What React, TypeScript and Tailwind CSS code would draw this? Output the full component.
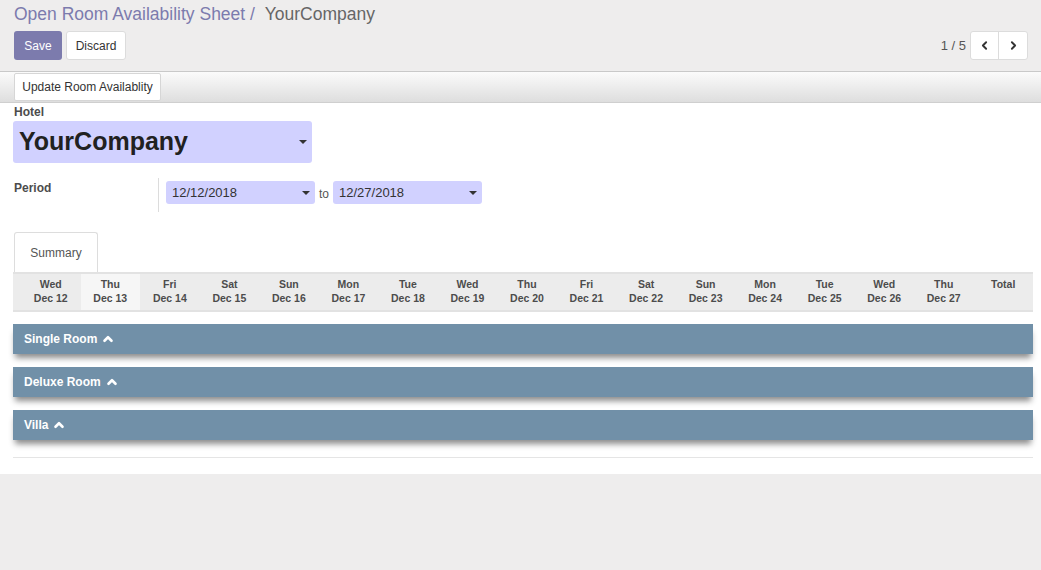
import { ChevronLeft, ChevronRight, ChevronUp } from "lucide-react";

const days = [
  ["Wed", "Dec 12"],
  ["Thu", "Dec 13"],
  ["Fri", "Dec 14"],
  ["Sat", "Dec 15"],
  ["Sun", "Dec 16"],
  ["Mon", "Dec 17"],
  ["Tue", "Dec 18"],
  ["Wed", "Dec 19"],
  ["Thu", "Dec 20"],
  ["Fri", "Dec 21"],
  ["Sat", "Dec 22"],
  ["Sun", "Dec 23"],
  ["Mon", "Dec 24"],
  ["Tue", "Dec 25"],
  ["Wed", "Dec 26"],
  ["Thu", "Dec 27"],
];

const rooms = ["Single Room", "Deluxe Room", "Villa"];

function Caret() {
  return (
    <svg width="8" height="4" viewBox="0 0 8 4" className="shrink-0">
      <path d="M0 0h8L4 4z" fill="#333" />
    </svg>
  );
}

function DateInput({ value }: { value: string }) {
  return (
    <div className="flex h-[23px] w-[149px] items-center justify-between rounded-[3px] bg-[#d1d1ff] pl-[6px] pr-[5px] text-[13px] text-[#333]">
      <span>{value}</span>
      <Caret />
    </div>
  );
}

export default function App() {
  return (
    <div className="min-h-[570px] bg-[#eeeded] font-['Liberation_Sans',Arial,sans-serif] text-[#4c4c4c]">
      {/* Control panel */}
      <div className="border-b border-[#c9c9c9] px-[14px] pb-[11px] pt-[3px]">
        <div className="text-[17.5px] leading-[22px]">
          <span className="text-[#7c7bad]">Open Room Availability Sheet /</span>
          <span className="text-[#666]">&nbsp;&nbsp;YourCompany</span>
        </div>
        <div className="mt-[6px] flex items-center justify-between">
          <div className="flex gap-[4px]">
            <button className="h-[29px] w-[48px] rounded-[3px] bg-[#7c7bad] text-[12px] text-white">
              Save
            </button>
            <button className="h-[29px] w-[60px] rounded-[3px] border border-[#dcdcdc] bg-white text-[12px] text-[#333]">
              Discard
            </button>
          </div>
          <div className="mr-[-1px] flex items-center gap-[4px]">
            <span className="text-[13px] text-[#555]">1 / 5</span>
            <div className="flex h-[29px] rounded-[3px] border border-[#dcdcdc] bg-white">
              <div className="flex w-[28px] items-center justify-center border-r border-[#dcdcdc]">
                <ChevronLeft size={13} strokeWidth={3.5} color="#333" />
              </div>
              <div className="flex w-[28px] items-center justify-center">
                <ChevronRight size={13} strokeWidth={3.5} color="#333" />
              </div>
            </div>
          </div>
        </div>
      </div>

      {/* Statusbar */}
      <div className="flex h-[31px] items-start border-b border-[#cfcfcf] bg-gradient-to-b from-[#fbfbfb] to-[#dedede] px-[14px] pt-[1px]">
        <button className="h-[28px] w-[147px] rounded-[2px] border border-[#d6d6d6] bg-white text-[12px] text-[#333]">
          Update Room Availablity
        </button>
      </div>

      {/* Sheet */}
      <div className="bg-white pb-[16px] pl-[13px] pr-[8px] pt-[2px]">
        <div className="pl-[1px] text-[12px] font-bold leading-[15px] text-[#4c4c4c]">Hotel</div>
        <div className="mt-[1px] flex h-[42px] w-[299px] items-center justify-between rounded-[3px] bg-[#d1d1ff] pl-[6px] pr-[5px]">
          <span className="text-[25px] font-bold text-[#212121]">YourCompany</span>
          <Caret />
        </div>

        <div className="mt-[15px] flex">
          <div className="w-[145px] pl-[1px] pt-[1px] text-[12px] font-bold text-[#4c4c4c]">Period</div>
          <div className="flex h-[34px] items-start border-l border-[#dcdcdc] pl-[7px] pt-[3px]">
            <DateInput value="12/12/2018" />
            <span className="mx-[4px] mt-[4px] text-[12px] text-[#555]">to</span>
            <DateInput value="12/27/2018" />
          </div>
        </div>

        {/* Tabs */}
        <div className="mt-[20px] pl-[1px]">
          <div className="flex h-[40px] w-[84px] items-center justify-center rounded-t-[3px] border border-b-0 border-[#dddddd] bg-white text-[12px] text-[#555]">
            Summary
          </div>
        </div>

        <div className="grid h-[40px] grid-cols-[repeat(17,minmax(0,1fr))] border-y-2 border-[#e2e2e2] bg-[#ececec] pl-[8px] text-[10.5px] font-bold leading-[14px] text-[#4c4c4c]">
          {days.map(([d, dt], i) => (
            <div
              key={i}
              className={`flex flex-col items-center pt-[3px] ${i === 1 ? "bg-[#f6f6f6]" : ""}`}
            >
              <span>{d}</span>
              <span>{dt}</span>
            </div>
          ))}
          <div className="flex flex-col items-center pt-[3px]">
            <span>Total</span>
          </div>
        </div>

        <div className="mt-[12px] flex flex-col gap-[13px]">
          {rooms.map((r) => (
            <div
              key={r}
              className="flex h-[30px] items-center gap-[4px] bg-[#7190a8] pl-[11px] text-[12px] font-bold text-white shadow-[0_6px_6px_-2px_rgba(0,0,0,0.45)]"
            >
              <span>{r}</span>
              <ChevronUp size={14} strokeWidth={4.5} color="#fff" />
            </div>
          ))}
        </div>

        <div className="mt-[17px] border-t border-[#e5e5e5]" />
      </div>
    </div>
  );
}
